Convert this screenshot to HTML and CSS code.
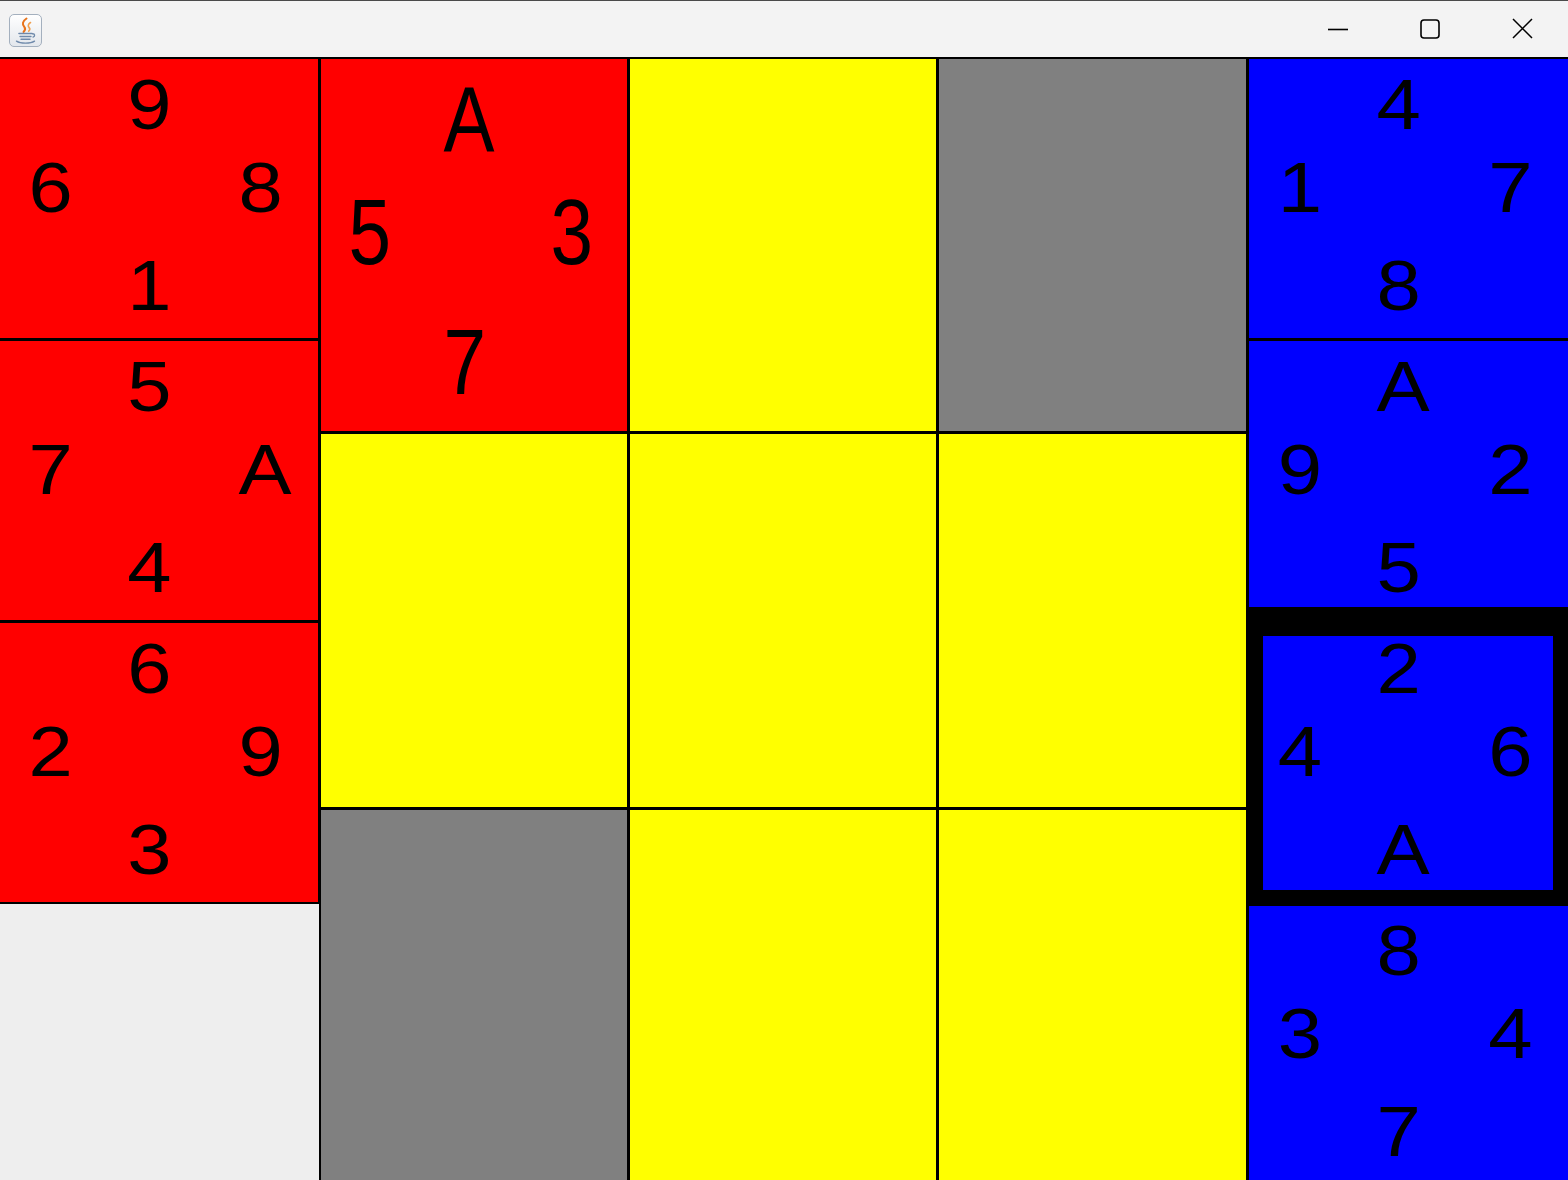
FILE: index.html
```html
<!DOCTYPE html>
<html lang="en">
<head>
<meta charset="utf-8">
<title>Cards</title>
<link rel="stylesheet" href="styles.css">
</head>
<body>
<div class="window">
  <header class="titlebar">
    <div class="app-icon">
      <svg width="33" height="33" viewBox="0 0 33 33">
        <defs>
          <linearGradient id="ig" x1="0" y1="0" x2="0" y2="1">
            <stop offset="0" stop-color="#ffffff"/>
            <stop offset="1" stop-color="#e3e7ec"/>
          </linearGradient>
        </defs>
        <rect x="0.5" y="0.5" width="32" height="32" rx="4.5" fill="url(#ig)" stroke="#a4b0be"/>
        <path d="M17.5 4.5c-4 2.8-4.6 5.6-2.2 8.4 1.3 1.6 1.1 3.2-0.8 5" fill="none" stroke="#e8741c" stroke-width="2" stroke-linecap="round"/>
        <path d="M21.5 8.5c-2.6 1.8-2.8 3.6-1.2 5.4 0.9 1 0.6 2.1-0.6 3.2" fill="none" stroke="#f0a050" stroke-width="1.6" stroke-linecap="round"/>
        <path d="M10 19.5h13" stroke="#6f8aab" stroke-width="1.6" stroke-linecap="round"/>
        <path d="M11 22.5h11" stroke="#6f8aab" stroke-width="1.4" stroke-linecap="round"/>
        <path d="M12 25.2h9" stroke="#6f8aab" stroke-width="1.4" stroke-linecap="round"/>
        <path d="M23 19.8c3.2-0.4 3.6 2.4 0.6 3.6" fill="none" stroke="#6f8aab" stroke-width="1.3"/>
        <path d="M7.5 27.2c4 2.6 14 2.6 18 0" fill="none" stroke="#6f8aab" stroke-width="1.4" stroke-linecap="round"/>
      </svg>
    </div>
    <div class="controls">
      <span class="ctl">
        <svg width="20" height="20" viewBox="0 0 20 20"><path d="M0 10.5h20" stroke="#000" stroke-width="1.6"/></svg>
      </span>
      <span class="ctl">
        <svg width="20" height="20" viewBox="0 0 20 20"><rect x="1" y="1" width="18" height="18" rx="3" fill="none" stroke="#000" stroke-width="1.6"/></svg>
      </span>
      <span class="ctl">
        <svg width="21" height="21" viewBox="0 0 21 21"><path d="M1 1L20 20M20 1L1 20" stroke="#000" stroke-width="1.5"/></svg>
      </span>
    </div>
  </header>

  <main class="board">
    <section class="side left">
      <div class="card red">
        <svg class="face" viewBox="0 0 100 100" preserveAspectRatio="none"><text x="40" y="25">9</text><text x="9" y="55">6</text><text x="75" y="55">8</text><text x="40" y="90">1</text></svg>
      </div>
      <div class="card red">
        <svg class="face" viewBox="0 0 100 100" preserveAspectRatio="none"><text x="40" y="25">5</text><text x="9" y="55">7</text><text x="75" y="55">A</text><text x="40" y="90">4</text></svg>
      </div>
      <div class="card red">
        <svg class="face" viewBox="0 0 100 100" preserveAspectRatio="none"><text x="40" y="25">6</text><text x="9" y="55">2</text><text x="75" y="55">9</text><text x="40" y="90">3</text></svg>
      </div>
      <div class="slot-empty"></div>
    </section>

    <section class="middle">
      <div class="card red">
        <svg class="face" viewBox="0 0 100 100" preserveAspectRatio="none"><text x="40" y="25">A</text><text x="9" y="55">5</text><text x="75" y="55">3</text><text x="40" y="90">7</text></svg>
      </div>
      <div class="card yellow"></div>
      <div class="card gray"></div>
      <div class="card yellow"></div>
      <div class="card yellow"></div>
      <div class="card yellow"></div>
      <div class="card gray"></div>
      <div class="card yellow"></div>
      <div class="card yellow"></div>
    </section>

    <section class="side right">
      <div class="card blue">
        <svg class="face" viewBox="0 0 100 100" preserveAspectRatio="none"><text x="40" y="25">4</text><text x="9" y="55">1</text><text x="75" y="55">7</text><text x="40" y="90">8</text></svg>
      </div>
      <div class="card blue">
        <svg class="face" viewBox="0 0 100 100" preserveAspectRatio="none"><text x="40" y="25">A</text><text x="9" y="55">9</text><text x="75" y="55">2</text><text x="40" y="90">5</text></svg>
      </div>
      <div class="card blue selected">
        <svg class="face" viewBox="0 0 100 100" preserveAspectRatio="none"><text x="40" y="25">2</text><text x="9" y="55">4</text><text x="75" y="55">6</text><text x="40" y="90">A</text></svg>
      </div>
      <div class="card blue">
        <svg class="face" viewBox="0 0 100 100" preserveAspectRatio="none"><text x="40" y="25">8</text><text x="9" y="55">3</text><text x="75" y="55">4</text><text x="40" y="90">7</text></svg>
      </div>
    </section>
  </main>
</div>
</body>
</html>
```

FILE: styles.css
```css
html, body {
  margin: 0;
  padding: 0;
  height: 100%;
  overflow: hidden;
  background: #eeeeee;
  font-family: "Liberation Sans", Arial, sans-serif;
}

.window {
  width: 1568px;
  height: 1180px;
  overflow: hidden;
}

.titlebar {
  box-sizing: border-box;
  height: 58px;
  background: #f3f3f3;
  border-top: 1px solid #4a4a4a;
  display: flex;
  align-items: center;
}

.app-icon {
  width: 33px;
  height: 33px;
  margin-left: 9px;
  margin-top: 1px;
}

.app-icon svg {
  display: block;
}

.controls {
  margin-left: auto;
  display: flex;
  height: 100%;
}

.ctl {
  width: 92px;
  height: 100%;
  display: flex;
  align-items: center;
  justify-content: center;
  padding-bottom: 2px;
  box-sizing: border-box;
}

.ctl svg {
  display: block;
}

.board {
  display: flex;
  width: 1570px;
  height: 1128px;
}

.side {
  width: 320px;
  flex: none;
  display: flex;
  flex-direction: column;
}

.side.right {
  width: 322px;
}

.side .card {
  height: 283px;
  flex: none;
}

.side.left .card {
  margin-left: -2px;
}

.slot-empty {
  height: 282px;
  flex: none;
}

.middle {
  flex: none;
  width: 928px;
  display: grid;
  grid-template-columns: 309px 309px 310px;
  grid-template-rows: 375px 376px 377px;
}

.card {
  box-sizing: border-box;
  border: 2px solid #000;
  margin: -1px 0 0 -1px;
}

.red { background: #ff0000; }
.yellow { background: #ffff00; }
.gray { background: #808080; }
.blue { background: #0000ff; }

.face {
  display: block;
  width: 100%;
  height: 100%;
  overflow: visible;
}

.face text {
  font-family: "Liberation Sans", Arial, sans-serif;
  font-size: 25px;
  fill: #000;
}

.selected {
  position: relative;
  z-index: 1;
}

.selected::after {
  content: "";
  position: absolute;
  top: -16px;
  left: -3px;
  right: -2px;
  bottom: -4px;
  border-style: solid;
  border-color: #000;
  border-width: 29px 17px 16px 17px;
  pointer-events: none;
}
```
